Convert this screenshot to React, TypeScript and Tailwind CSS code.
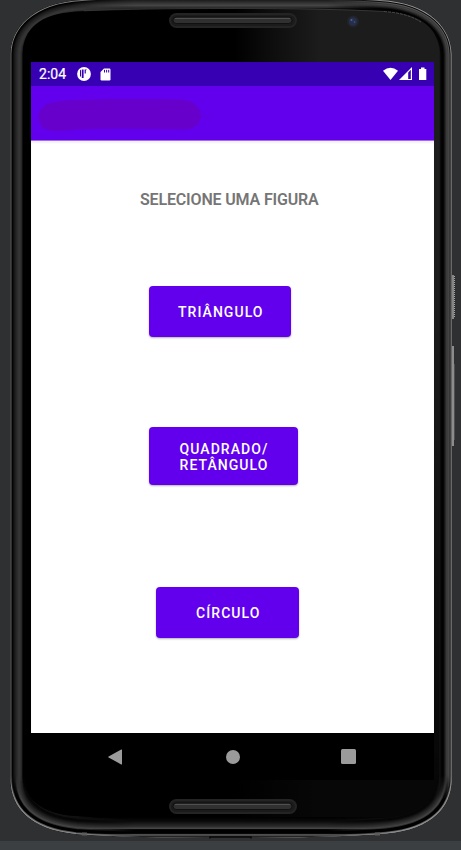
import React from "react";

const OUTLINE =
  "M10.5 54 C11 30 30 3 82 0 Q120 -3 231 -3 Q342 -3 380 0 C432 3 451 30 451.6 54 V782 C450 806 434 829 386 833.5 Q330 838 231 838 Q130 838 76 834 C28 829 12 806 10.5 782 Z";
const GLASS =
  "M22.7 52 C24 30 38 14 76 11.5 Q140 8 231 8 Q322 8 386 11.5 C424 14 438 30 439.6 52 V778 C437 799 420 816 386 818 Q320 821 231 821 Q142 821 76 816 C42 814 25 799 22.7 778 Z";

// Bands of the metal rim, from the innermost one to the edge: [depth, colour].
const LEFT_RIM: [number, string][] = [
  [13, "#0a0a0a"],
  [12, "#222222"],
  [11, "#2c2c2c"],
  [10, "#343434"],
  [9, "#363636"],
  [8, "#313131"],
  [7, "#2a2a2a"],
  [6, "#242424"],
  [5, "#1d1d1d"],
  [4, "#151515"],
  [3, "#090909"],
  [2, "#000000"],
  [0.9, "#7c7c7c"],
];
const RIGHT_RIM: [number, string][] = [
  [13, "#111111"],
  [11, "#040404"],
  [9, "#000000"],
  [8, "#101010"],
  [7, "#252525"],
  [6, "#343434"],
  [5, "#424242"],
  [4, "#3a3a3a"],
  [3, "#555555"],
  [2, "#080808"],
  [1, "#999999"],
];
const BOTTOM_RIM: [number, string][] = [
  [15, "#060606"],
  [13, "#0d0d0d"],
  [12, "#161616"],
  [11, "#1f1f1f"],
  [10, "#282828"],
  [9, "#303030"],
  [8, "#383838"],
  [7, "#454545"],
  [6, "#303030"],
  [5, "#000000"],
  [1.8, "#5a5a5a"],
  [1, "#8f8f8f"],
];

function Rim({ bands }: { bands: [number, string][] }) {
  return (
    <>
      {bands.map(([depth, color]) => (
        <path key={depth} d={OUTLINE} stroke={color} strokeWidth={depth * 2} />
      ))}
    </>
  );
}

function Grille({ y }: { y: number }) {
  return (
    <g>
      <rect x="169" y={y} width="128" height="15" rx="7.5" fill="#242424" />
      <rect x="171" y={y + 2} width="124" height="11" rx="5.5" fill="#1b1b1b" />
      <rect x="173" y={y + 4} width="119" height="6.5" rx="3.2" fill="#303030" stroke="#101010" />
      <path d={`M175 ${y + 5.5} H290`} stroke="#505050" strokeWidth="1" />
    </g>
  );
}

function PhoneBody() {
  return (
    <svg className="absolute inset-0" width="461" height="850" viewBox="0 0 461 850" fill="none">
      <defs>
        <clipPath id="left">
          <rect x="0" y="0" width="231" height="850" />
        </clipPath>
        <clipPath id="right">
          <rect x="231" y="0" width="230" height="850" />
        </clipPath>
        <clipPath id="body">
          <path d={OUTLINE} />
        </clipPath>
        <clipPath id="glassClip">
          <path d={GLASS} />
        </clipPath>
        <linearGradient id="sheen" x1="235" x2="320" y1="0" y2="0" gradientUnits="userSpaceOnUse">
          <stop offset="0" stopColor="#000" />
          <stop offset=".35" stopColor="#0b0b0b" />
          <stop offset="1" stopColor="#1c1c1c" />
        </linearGradient>
        <linearGradient id="fade" x1="0" x2="0" y1="0" y2="850" gradientUnits="userSpaceOnUse">
          <stop offset=".35" stopColor="#000" stopOpacity="0" />
          <stop offset=".9" stopColor="#000" stopOpacity=".75" />
        </linearGradient>
        <linearGradient id="topRim" x1="0" x2="0" y1="0" y2="9" gradientUnits="userSpaceOnUse">
          <stop offset="0" stopColor="#1c1c1c" />
          <stop offset=".6" stopColor="#454545" />
          <stop offset="1" stopColor="#1c1c1c" />
        </linearGradient>
        <linearGradient id="bottomRim" x1="0" x2="0" y1="817" y2="838" gradientUnits="userSpaceOnUse">
          <stop offset="0" stopColor="#000" />
          <stop offset=".2" stopColor="#0a0a0a" />
          <stop offset=".48" stopColor="#303030" />
          <stop offset=".54" stopColor="#505050" />
          <stop offset=".6" stopColor="#000" />
          <stop offset=".78" stopColor="#000" />
          <stop offset=".85" stopColor="#666" />
          <stop offset=".92" stopColor="#222" />
          <stop offset="1" stopColor="#333" />
        </linearGradient>
        <linearGradient id="rimFade" x1="70" x2="392" y1="0" y2="0" gradientUnits="userSpaceOnUse">
          <stop offset="0" stopColor="#fff" stopOpacity="0" />
          <stop offset=".2" stopColor="#fff" />
          <stop offset=".8" stopColor="#fff" />
          <stop offset="1" stopColor="#fff" stopOpacity="0" />
        </linearGradient>
        <mask id="rimMask">
          <rect width="461" height="850" fill="url(#rimFade)" />
        </mask>
        <linearGradient id="lowerFade" x1="0" x2="0" y1="775" y2="800" gradientUnits="userSpaceOnUse">
          <stop offset="0" stopColor="#fff" stopOpacity="0" />
          <stop offset="1" stopColor="#fff" />
        </linearGradient>
        <mask id="lowerMask">
          <rect y="775" width="461" height="75" fill="url(#lowerFade)" />
        </mask>
      </defs>

      {/* side keys */}
      <rect x="452" y="275" width="2" height="44" fill="#858585" />
      <path d="M454.5 276 V318" stroke="#a5a5a5" strokeDasharray="1 1" />
      <rect x="452" y="346" width="2" height="100" fill="#8c8c8c" />
      <path d="M454.5 364 V440" stroke="#505050" />

      <path d={OUTLINE} fill="#111" />
      <g clipPath="url(#glassClip)">
        <rect width="461" height="850" fill="url(#sheen)" />
        <rect width="461" height="850" fill="url(#fade)" />
      </g>
      <g clipPath="url(#body)">
        <g clipPath="url(#left)">
          <Rim bands={LEFT_RIM} />
        </g>
        <g clipPath="url(#right)">
          <Rim bands={RIGHT_RIM} />
        </g>
        <g clipPath="url(#glassClip)">
          <rect width="461" height="790" fill="url(#sheen)" />
          <rect width="461" height="790" fill="url(#fade)" />
        </g>
        <g mask="url(#lowerMask)">
          <Rim bands={BOTTOM_RIM} />
        </g>
        <g mask="url(#rimMask)">
          <rect x="60" y="0" width="342" height="8.5" fill="url(#topRim)" />
          <rect x="60" y="817" width="342" height="23" fill="url(#bottomRim)" />
        </g>
      </g>
      <path d="M84 10.8 Q140 8.5 231 8.5 Q330 8.5 384 11.5" stroke="#404040" strokeWidth=".7" />
      <path d="M384 11.5 Q407 13 421 22" stroke="#585858" strokeWidth=".8" strokeDasharray="3 1" />
      <path d="M82 834 h5 M375 834 h5" stroke="#5c5c5c" strokeWidth="3" />
      <path d="M210 838.5 v-1.5 H251 v1.5" stroke="#080808" strokeWidth="1.5" />

      <Grille y={13} />
      <Grille y={799} />

      {/* front camera */}
      <circle cx="353" cy="21.5" r="6" fill="#22242a" />
      <circle cx="353" cy="21.5" r="4.2" fill="#252e4b" />
      <circle cx="351.5" cy="20" r="1" fill="#53638f" />
      <circle cx="354.5" cy="22" r=".8" fill="#4a5a85" />
    </svg>
  );
}

function StatusBar() {
  return (
    <div className="flex h-6 items-center bg-[#3700b3] pl-2 pr-[7px] text-white">
      <span className="w-[38px] text-[14px] leading-6 tracking-[0.05px] [-webkit-text-stroke:0.2px_white]">2:04</span>
      <svg width="14" height="14" viewBox="0 0 14 14">
        <circle cx="7" cy="7" r="6.9" fill="#fff" />
        <path d="M3 3.4 L4 2.6 V9.5 H3 Z M4.8 2.4 H6.6 V11 H4.8 Z" fill="#3700b3" />
        <path d="M7.6 2.6 H10 L8.8 3.6 V6.4 H7.6 Z" fill="#3700b3" />
      </svg>
      <svg className="ml-[9px]" width="11" height="13" viewBox="0 0 11 13">
        <path d="M4 .5 H9.3 Q10.5 .5 10.5 1.7 V11.3 Q10.5 12.5 9.3 12.5 H1.7 Q.5 12.5 .5 11.3 V4 Z" fill="#fff" />
        <path d="M4.5 1.8 V4.5 M6.6 1.8 V4.5 M8.7 1.8 V4.5" stroke="#3700b3" strokeWidth="1" />
      </svg>
      <svg className="ml-auto" width="44" height="14" viewBox="0 0 44 14">
        <path d="M0 3.8 Q7.5 -2.2 15 3.8 L7.5 13 Z" fill="#fff" />
        <path d="M16 13 L29 0 V13 Z" fill="#fff" />
        <path d="M25.2 5.4 L27.8 2.8 V12 H25.2 Z" fill="#3700b3" />
        <path d="M36 2 H38 V.5 H41.5 V2 H43.3 V13 H36 Z" fill="#fff" />
      </svg>
    </div>
  );
}

function AppBar() {
  return (
    <header className="h-[54px] bg-[#6200ee]">
      <svg width="210" height="54" viewBox="0 0 210 54">
        <path
          d="M24 16 C36 14 50 13.2 90 13 Q130 12.7 155 14 C165 16 170 24 170 30 C170 37 163 43.5 154 43.5 L100 42.8 Q60 42.5 39 44 C24 46 8 47 7.5 31 C7.5 23 15 16.5 24 16 Z"
          fill="#6700cb"
        />
        <path d="M169 31.5 H181" stroke="#6500d6" strokeWidth="1" />
      </svg>
    </header>
  );
}

function FigureButton({ children, className }: { children: React.ReactNode; className: string }) {
  return (
    <button
      className={`flex items-center justify-center rounded-[4px] bg-[#6200ee] pl-[2px] text-center text-[14px] font-medium leading-4 tracking-[1.06px] text-white shadow-[0_1px_2px_rgba(0,0,0,0.3)] ${className}`}
    >
      {children}
    </button>
  );
}

function NavBar() {
  return (
    <nav className="flex h-[47px] items-center bg-black pl-[76px] text-[#9b9b9b]">
      <svg width="16" height="16" viewBox="0 0 16 16" fill="currentColor">
        <path d="M14.2 .5 Q15 .2 15 1 V15 Q15 15.8 14.2 15.4 L1.6 8.5 Q.8 8 1.6 7.5 Z" />
      </svg>
      <span className="ml-[102.5px] h-[14px] w-[14px] rounded-full bg-current" />
      <span className="ml-[101.5px] h-[15px] w-[15px] rounded-[1.5px] bg-current" />
    </nav>
  );
}

export default function App() {
  return (
    <div className="relative flex h-[850px] w-[461px] flex-col overflow-hidden bg-[#2f3032] font-['Roboto','Noto_Sans',sans-serif]">
      <div className="mt-auto h-[9px] bg-[#3c3f41]" />
      <div className="absolute inset-0">
        <PhoneBody />
        <div className="relative ml-[31px] mt-[62px] flex h-[718px] w-[403px] flex-col">
          <StatusBar />
          <AppBar />
          <main className="flex flex-1 flex-col items-start border-t border-[#a46be8] bg-white pb-px shadow-[inset_0_2px_2px_rgba(0,0,0,0.06)]">
            <h1 className="ml-[109px] mt-[49px] whitespace-nowrap text-[16px] font-semibold leading-5 tracking-[-0.16px] text-[#757575]">
              SELECIONE UMA FIGURA
            </h1>
            <FigureButton className="ml-[117.5px] mt-[76px] h-[51px] w-[142.5px]">TRIÂNGULO</FigureButton>
            <FigureButton className="ml-[117.5px] mt-[90px] h-[58px] w-[149px] pt-[2px]">
              QUADRADO/
              <br />
              RETÂNGULO
            </FigureButton>
            <FigureButton className="ml-[125px] mt-[102px] h-[50.5px] w-[142.5px] pt-[2px]">CÍRCULO</FigureButton>
          </main>
          <NavBar />
        </div>
      </div>
    </div>
  );
}
